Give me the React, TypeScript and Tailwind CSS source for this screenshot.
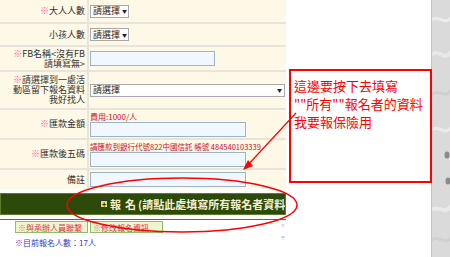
import React from "react";

const font = { fontFamily: '"Noto Sans CJK TC", "Noto Sans", sans-serif' };

function Star() {
  return <span className="text-[#e8679b]">※</span>;
}

function Select({ wide = false }: { wide?: boolean }) {
  return (
    <div
      className={`flex h-[13px] items-center overflow-hidden whitespace-nowrap border border-[#a9a9a9] bg-white pl-[2px] pr-[2px] text-[9px] leading-[10px] text-[#222] ${
        wide ? "w-[195px] justify-between" : "w-[39px] gap-[2px]"
      }`}
    >
      <span className="shrink-0">請選擇</span>
      <span className="shrink-0 text-[5px] leading-[6px]">▼</span>
    </div>
  );
}

function Input({ w }: { w: string }) {
  return <div className={`h-[15px] shrink-0 border border-[#9fb3c8] bg-[#f1f7ff] ${w}`} />;
}

function Label({ children }: { children: React.ReactNode }) {
  return (
    <div className="flex w-[87px] items-center justify-end bg-[#fef8e6] pr-[2px] text-right text-[9px] leading-[10px] text-[#333]">
      <div className="whitespace-nowrap">{children}</div>
    </div>
  );
}

function Row({ h, label, children, col = false }: { h: string; label: React.ReactNode; children: React.ReactNode; col?: boolean }) {
  return (
    <div className={`flex gap-[2px] ${h}`}>
      <Label>{label}</Label>
      <div className={`flex flex-1 bg-[#fef8e6] pl-[1px] ${col ? "flex-col pt-[2px]" : "items-center"}`}>{children}</div>
    </div>
  );
}

export default function App() {
  return (
    <div className="relative flex h-[257px] w-[450px] overflow-hidden bg-white" style={font}>
      <div className="flex w-[431px] flex-col">
        <div className="flex w-[286px] flex-col gap-[2px] bg-[#e8e4da]">
          <Row h="h-[22px]" label={<><Star />大人人數</>}>
            <Select />
          </Row>
          <Row h="h-[21px]" label="小孩人數">
            <Select />
          </Row>
          <Row h="h-[23px]" label={<><Star />FB名稱&lt;沒有FB<br />請填寫無&gt;</>}>
            <Input w="w-[125px]" />
          </Row>
          <Row h="h-[36px]" label={<><Star />請選擇到一處活<br />動區留下報名資料<br />我好找人</>}>
            <Select wide />
          </Row>
          <Row h="h-[28px]" col label={<><Star />匯款金額</>}>
            <div className="text-[8px] leading-[10px] text-[#c8102e]">費用:1000/人</div>
            <Input w="w-[156px]" />
          </Row>
          <Row h="h-[28px]" col label={<><Star />匯款後五碼</>}>
            <div className="whitespace-nowrap text-[7.5px] leading-[10px] text-[#c8102e]">請匯款到銀行代號822中國信託 帳號 484540103339</div>
            <Input w="w-[156px]" />
          </Row>
          <Row h="h-[19px]" col label="備註">
            <Input w="w-[156px]" />
          </Row>
        </div>

        <div className="mt-[4px] flex h-[22px] w-[286px] items-center overflow-hidden border border-[#5d7d2c] bg-[#2d4a0b] pl-[99px]">
          <div className="mr-[2px] flex h-[8px] w-[8px] shrink-0 items-center justify-center border border-[#333] bg-[#f2e34a] text-[8px] font-bold leading-[8px] text-[#222]">+</div>
          <div className="flex shrink-0 whitespace-nowrap text-[11px] font-bold leading-[14px] text-[#f3efd2]">
            <span>報</span>
            <span className="ml-[4px]">名</span>
            <span className="ml-[2px]">(請點此處填寫所有報名者資料</span>
          </div>
        </div>
        <div className="mt-[4px] h-[1px] w-[286px] bg-[#4f7a22]" />

        <div className="flex w-[286px]">
          <div className="flex-1">
            <div className="ml-[15px] mt-[1px] flex gap-[2px]">
              <div className="flex h-[12px] w-[73px] items-center whitespace-nowrap border border-[#8fbf6a] bg-[#eef4cc] pl-[2px] text-[8px] leading-[9px] text-[#e03050]">
                <Star />與承辦人員聯繫
              </div>
              <div className="flex h-[12px] w-[73px] items-center whitespace-nowrap border border-[#8fbf6a] bg-[#eef4cc] pl-[2px] text-[8px] leading-[9px] text-[#e03050]">
                <Star />修改報名資訊
              </div>
            </div>
            <div className="ml-[15px] mt-[5px] text-[8px] leading-[10px] text-[#3a3acc]">※目前報名人數：17人</div>
          </div>
          <div className="mr-[1px] mt-[4px] flex flex-col gap-[8px] text-[4px] leading-[4px]">
            <span className="text-[#e8679b]">※</span>
            <span className="text-[#5a5ae0]">※</span>
          </div>
        </div>
      </div>

      <div className="relative w-[19px] border-l border-[#c2c2c2] bg-[#dadada]">
        <svg width="19" height="257" className="absolute inset-0">
          <path d="M0 20 C6 14 12 26 19 18" stroke="#ececec" strokeWidth="3" fill="none" />
          <path d="M0 55 C7 48 12 62 19 52" stroke="#e8e8e8" strokeWidth="4" fill="none" />
          <path d="M0 95 C6 88 13 100 19 90" stroke="#cfcfcf" strokeWidth="3" fill="none" />
          <path d="M0 130 C6 124 12 136 19 128" stroke="#ebebeb" strokeWidth="3" fill="none" />
          <ellipse cx="15" cy="155" rx="2.5" ry="3.5" fill="#8a8a8a" />
          <ellipse cx="16" cy="181" rx="2.5" ry="3.5" fill="#8a8a8a" />
          <path d="M0 210 C6 204 13 216 19 206" stroke="#e9e9e9" strokeWidth="4" fill="none" />
          <path d="M0 240 C7 234 12 246 19 238" stroke="#d0d0d0" strokeWidth="3" fill="none" />
        </svg>
      </div>

      <div className="absolute left-[289px] top-[69px] h-[114px] w-[143px] border-2 border-[#ff0000] bg-white pl-[3px] pt-[6px] text-[13px] leading-[18px] text-[#ff0000]">
        <div className="whitespace-nowrap">這邊要按下去填寫</div>
        <div className="whitespace-nowrap">""所有""報名者的資料</div>
        <div className="whitespace-nowrap">我要報保險用</div>
      </div>

      <svg width="450" height="257" className="pointer-events-none absolute inset-0">
        <ellipse cx="182" cy="205" rx="115" ry="27" stroke="#ff0000" strokeWidth="1.5" fill="none" />
        <line x1="296" y1="113" x2="246" y2="167" stroke="#ff0000" strokeWidth="1.2" />
        <polygon points="243,170 248,160 253,166" fill="#ff0000" />
      </svg>
    </div>
  );
}
